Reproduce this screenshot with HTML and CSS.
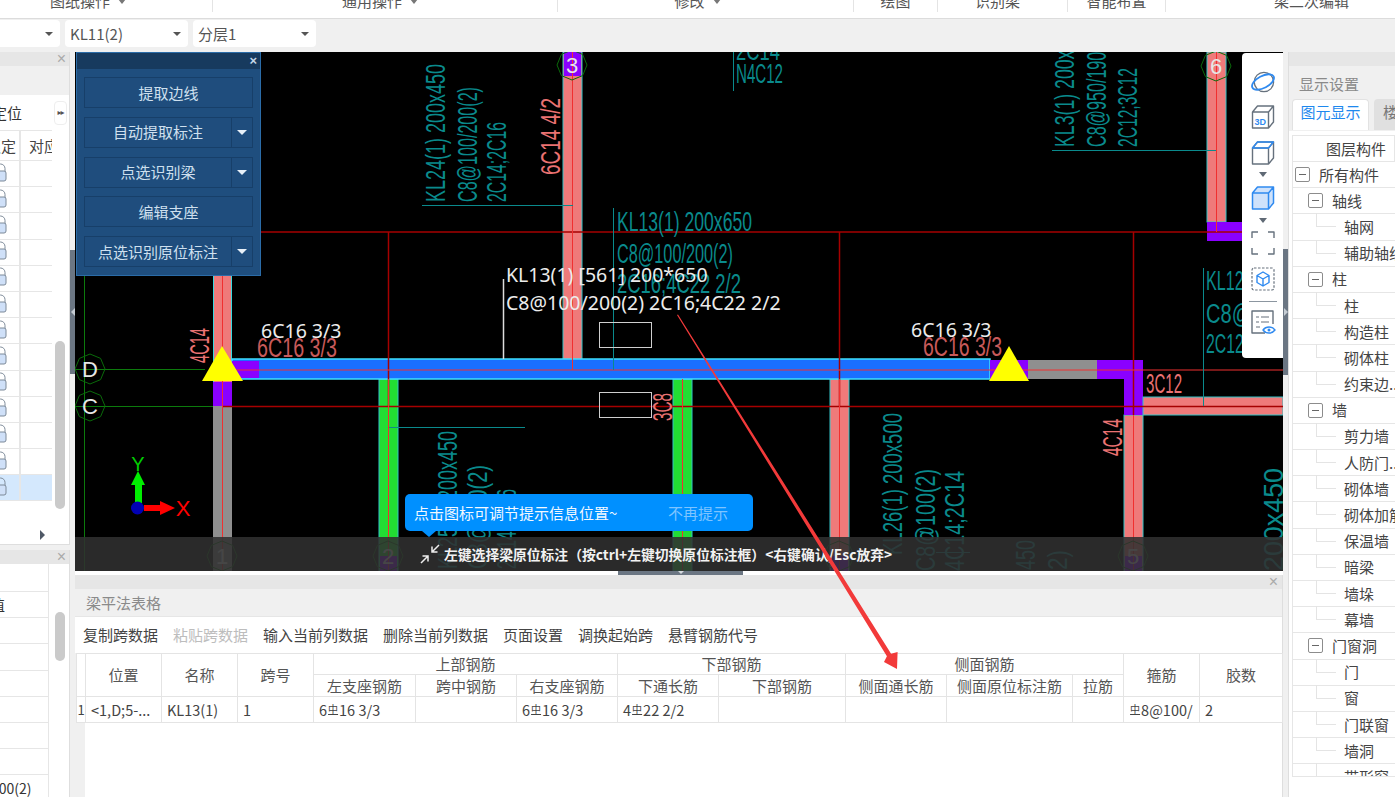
FILE: index.html
```html
<!DOCTYPE html>
<html lang="zh-CN">
<head>
<meta charset="utf-8">
<title>梁平法表格</title>
<link rel="stylesheet" href="styles.css">
</head>
<body>
<div class="app">
  <header class="ribbon">
    <div class="rb-sec rb-1"><span class="rb-label">图纸操作<i class="rb-caret"></i></span></div>
    <div class="rb-sec rb-2"><span class="rb-label">通用操作<i class="rb-caret"></i></span></div>
    <div class="rb-sec rb-3"><span class="rb-label">修改<i class="rb-caret"></i></span></div>
    <div class="rb-sec rb-4"><span class="rb-label">绘图</span></div>
    <div class="rb-sec rb-5"><span class="rb-label">识别梁</span></div>
    <div class="rb-sec rb-6"><span class="rb-label">智能布置</span></div>
    <div class="rb-sec rb-7"><span class="rb-label">梁二次编辑</span></div>
  </header>

  <div class="selects">
    <div class="sel sel-a"><span></span><i class="caret"></i></div>
    <div class="sel sel-b"><span>KL11(2)</span><i class="caret"></i></div>
    <div class="sel sel-b"><span>分层1</span><i class="caret"></i></div>
  </div>

  <div class="main">
    <aside class="left">
      <section class="lp-top">
        <div class="pane-head"><span class="close">×</span></div>
        <div class="lp-strip"></div>
        <div class="lp-title"><span class="lp-title-text">定位</span><span class="more">▸▸</span></div>
        <div class="lp-table">
          <div class="lp-row lp-head"><div class="c1"><span class="c1-text">锁定</span></div><div class="c2">对应</div></div>
          <div class="lp-row"><div class="c1"><svg class="lock"><use href="#lock"/></svg></div><div class="c2"></div></div>
          <div class="lp-row"><div class="c1"><svg class="lock"><use href="#lock"/></svg></div><div class="c2"></div></div>
          <div class="lp-row"><div class="c1"><svg class="lock"><use href="#lock"/></svg></div><div class="c2"></div></div>
          <div class="lp-row"><div class="c1"><svg class="lock"><use href="#lock"/></svg></div><div class="c2"></div></div>
          <div class="lp-row"><div class="c1"><svg class="lock"><use href="#lock"/></svg></div><div class="c2"></div></div>
          <div class="lp-row"><div class="c1"><svg class="lock"><use href="#lock"/></svg></div><div class="c2"></div></div>
          <div class="lp-row"><div class="c1"><svg class="lock"><use href="#lock"/></svg></div><div class="c2"></div></div>
          <div class="lp-row"><div class="c1"><svg class="lock"><use href="#lock"/></svg></div><div class="c2"></div></div>
          <div class="lp-row"><div class="c1"><svg class="lock"><use href="#lock"/></svg></div><div class="c2"></div></div>
          <div class="lp-row"><div class="c1"><svg class="lock"><use href="#lock"/></svg></div><div class="c2"></div></div>
          <div class="lp-row"><div class="c1"><svg class="lock"><use href="#lock"/></svg></div><div class="c2"></div></div>
          <div class="lp-row"><div class="c1"><svg class="lock"><use href="#lock"/></svg></div><div class="c2"></div></div>
          <div class="lp-row is-sel"><div class="c1"><svg class="lock"><use href="#lock"/></svg></div><div class="c2"></div></div>
        </div>
        <div class="scroll scroll-a"></div>
        <span class="lp-arrow"></span>
      </section>
      <section class="lp-bottom">
        <div class="pane-head"><span class="close">×</span></div>
        <div class="lb-table">
          <div class="lb-row lb-blank"></div>
          <div class="lb-row"><span class="lb-clip">值</span></div>
          <div class="lb-row"></div>
          <div class="lb-row"></div>
          <div class="lb-row"></div>
          <div class="lb-row"></div>
          <div class="lb-row"></div>
          <div class="lb-row"></div>
          <div class="lb-row"><span class="lb-clip2">100(2)</span></div>
        </div>
        <div class="scroll scroll-b"></div>
      </section>
    </aside>

    <div class="split"><div class="split-handle"><span class="tri-l"></span></div></div>

    <div class="center">
      <div class="canvas">
        <svg class="cad" viewBox="75 52 1208 519" width="1208" height="519">
          <defs>
            <polygon id="oct" points="15,0 10.6,10.6 0,15 -10.6,10.6 -15,0 -10.6,-10.6 0,-15 10.6,-10.6" class="bubble"/>
          </defs>

          <!-- axis lines -->
          <line x1="84.5" y1="52" x2="84.5" y2="571" class="l-green"/>
          <line x1="75" y1="369.5" x2="205" y2="369.5" class="l-green"/>
          <line x1="75" y1="406.5" x2="214" y2="406.5" class="l-green"/>

          <!-- columns -->
          <rect x="213" y="260" width="19" height="122" class="f-pink"/>
          <rect x="213" y="382" width="19" height="24" class="f-purple"/>
          <rect x="213" y="406" width="19" height="165" class="f-grey"/>
          <line x1="213.5" y1="260" x2="213.5" y2="382" class="l-cyan"/>
          <line x1="231.5" y1="260" x2="231.5" y2="360" class="l-cyan"/>

          <rect x="563" y="52" width="19" height="308" class="f-pink s-teal"/>
          <rect x="564" y="52" width="17" height="24" class="f-purple"/>

          <rect x="1207" y="52" width="19" height="170" class="f-pink s-teal"/>
          <rect x="1207" y="222" width="36" height="19" class="f-purple"/>

          <rect x="379" y="379" width="19" height="192" class="f-green s-teal"/>
          <rect x="673" y="379" width="19" height="192" class="f-green s-teal"/>
          <rect x="830" y="379" width="19" height="192" class="f-pink s-teal"/>
          <rect x="1124" y="415" width="19" height="156" class="f-pink s-teal"/>
          <rect x="380" y="556" width="17" height="15" class="f-purple"/>
          <rect x="831" y="556" width="17" height="15" class="f-purple"/>
          <rect x="1125" y="556" width="17" height="15" class="f-purple"/>

          <!-- beams -->
          <rect x="232" y="359" width="758" height="20" class="f-blue s-cyan"/>
          <rect x="232" y="361" width="27" height="17" class="f-purple"/>
          <rect x="990" y="360" width="38" height="19" class="f-purple"/>
          <rect x="1028" y="360" width="69" height="19" class="f-grey"/>
          <polygon points="1097,360 1143,360 1143,415 1124,415 1124,379 1097,379" class="f-purple"/>
          <rect x="1143" y="397" width="140" height="18" class="f-pink s-teal"/>

          <!-- grid lines -->
          <line x1="222" y1="232" x2="1242" y2="232" class="l-dred"/>
          <line x1="222" y1="406.5" x2="1283" y2="406.5" class="l-dred"/>
          <line x1="388.5" y1="232" x2="388.5" y2="406" class="l-dred"/>
          <line x1="839.5" y1="232" x2="839.5" y2="406" class="l-dred"/>
          <line x1="1133.5" y1="232" x2="1133.5" y2="415" class="l-dred"/>
          <line x1="232" y1="370" x2="1283" y2="370" class="l-red"/>
          <line x1="222.5" y1="276" x2="222.5" y2="571" class="l-red"/>
          <line x1="572.5" y1="52" x2="572.5" y2="370" class="l-red"/>
          <line x1="1216.5" y1="52" x2="1216.5" y2="232" class="l-red"/>
          <line x1="388.5" y1="379" x2="388.5" y2="571" class="l-red"/>
          <line x1="682.5" y1="379" x2="682.5" y2="571" class="l-red"/>
          <line x1="839.5" y1="379" x2="839.5" y2="571" class="l-red"/>
          <line x1="1133.5" y1="415" x2="1133.5" y2="571" class="l-red"/>

          <!-- teal annotation leaders -->
          <line x1="422" y1="205.5" x2="573" y2="205.5" class="l-teal"/>
          <line x1="613.5" y1="208" x2="613.5" y2="370" class="l-teal"/>
          <line x1="733.5" y1="52" x2="733.5" y2="91" class="l-teal"/>
          <line x1="1052" y1="150.5" x2="1216" y2="150.5" class="l-teal"/>
          <line x1="1203.5" y1="268" x2="1203.5" y2="406" class="l-teal"/>
          <line x1="389" y1="427.5" x2="525" y2="427.5" class="l-teal"/>
          <line x1="936" y1="552.5" x2="970" y2="552.5" class="l-teal"/>

          <!-- teal annotations -->
          <text class="t-teal" transform="translate(445,202) rotate(-90)" textLength="138" lengthAdjust="spacingAndGlyphs">KL24(1) 200x450</text>
          <text class="t-teal" transform="translate(477,202) rotate(-90)" textLength="115" lengthAdjust="spacingAndGlyphs">C8@100/200(2)</text>
          <text class="t-teal" transform="translate(506,202) rotate(-90)" textLength="80" lengthAdjust="spacingAndGlyphs">2C14;2C16</text>
          <text class="t-teal" x="617" y="231" textLength="135" lengthAdjust="spacingAndGlyphs">KL13(1) 200x650</text>
          <text class="t-teal" x="617" y="263" textLength="116" lengthAdjust="spacingAndGlyphs">C8@100/200(2)</text>
          <text class="t-teal" x="617" y="293" textLength="124" lengthAdjust="spacingAndGlyphs">2C16;4C22 2/2</text>
          <text class="t-teal" x="736" y="60" textLength="44" lengthAdjust="spacingAndGlyphs">2C14</text>
          <text class="t-teal" x="736" y="83" textLength="47" lengthAdjust="spacingAndGlyphs">N4C12</text>
          <text class="t-teal" transform="translate(1074,147) rotate(-90)" textLength="126" lengthAdjust="spacingAndGlyphs">KL3(1) 200x650</text>
          <text class="t-teal" transform="translate(1106,147) rotate(-90)" textLength="115" lengthAdjust="spacingAndGlyphs">C8@950/190(2)</text>
          <text class="t-teal" transform="translate(1137,147) rotate(-90)" textLength="79" lengthAdjust="spacingAndGlyphs">2C12;3C12</text>
          <text class="t-teal" x="1206" y="290" textLength="124" lengthAdjust="spacingAndGlyphs">KL12(1) 200x500</text>
          <text class="t-teal" x="1206" y="323" textLength="104" lengthAdjust="spacingAndGlyphs">C8@100(2)</text>
          <text class="t-teal" x="1206" y="353" textLength="80" lengthAdjust="spacingAndGlyphs">2C12;2C14</text>
          <text class="t-teal" transform="translate(457,569) rotate(-90)" textLength="138" lengthAdjust="spacingAndGlyphs">KL25(1) 200x450</text>
          <text class="t-teal" transform="translate(487,569) rotate(-90)" textLength="104" lengthAdjust="spacingAndGlyphs">C8@100(2)</text>
          <text class="t-teal" transform="translate(516,569) rotate(-90)" textLength="80" lengthAdjust="spacingAndGlyphs">2C14;2C16</text>
          <text class="t-teal" transform="translate(902,555) rotate(-90)" textLength="142" lengthAdjust="spacingAndGlyphs">KL26(1) 200x500</text>
          <text class="t-teal" transform="translate(935,571) rotate(-90)" textLength="102" lengthAdjust="spacingAndGlyphs">C8@100(2)</text>
          <text class="t-teal" transform="translate(964,571) rotate(-90)" textLength="100" lengthAdjust="spacingAndGlyphs">4C14;2C14</text>
          <text class="t-teal" transform="translate(1035,570) rotate(-90)" textLength="30" lengthAdjust="spacingAndGlyphs">450</text>
          <text class="t-teal" transform="translate(1067,570) rotate(-90)" textLength="20" lengthAdjust="spacingAndGlyphs">2)</text>
          <text class="t-teal" transform="translate(1283,571) rotate(-90)" textLength="103" lengthAdjust="spacingAndGlyphs">200x450</text>

          <!-- pink annotations -->
          <text class="t-pink" transform="translate(560,175) rotate(-90)" textLength="77" lengthAdjust="spacingAndGlyphs">6C14 4/2</text>
          <text class="t-pink" x="1146" y="393" textLength="36" lengthAdjust="spacingAndGlyphs">3C12</text>
          <text class="t-pink" transform="translate(209,363) rotate(-90)" textLength="35" lengthAdjust="spacingAndGlyphs">4C14</text>
          <text class="t-pink" transform="translate(1122,456) rotate(-90)" textLength="37" lengthAdjust="spacingAndGlyphs">4C14</text>
          <text class="t-pink" transform="translate(672,421) rotate(-90)" textLength="28" lengthAdjust="spacingAndGlyphs">3C8</text>
          <text class="t-rose" x="257" y="357" textLength="80" lengthAdjust="spacingAndGlyphs">6C16  3/3</text>
          <text class="t-rose" x="923" y="356" textLength="79" lengthAdjust="spacingAndGlyphs">6C16  3/3</text>

          <!-- axis bubbles -->
          <use href="#oct" x="90" y="369"/><use href="#oct" x="90" y="406"/>
          <use href="#oct" x="572" y="65"/><use href="#oct" x="1216" y="66"/>
          <use href="#oct" x="222" y="556"/><use href="#oct" x="388" y="556"/>
          <use href="#oct" x="839" y="556"/><use href="#oct" x="1133" y="556"/>
          <text class="t-bub" x="90" y="377">D</text>
          <text class="t-bub" x="90" y="414">C</text>
          <text class="t-bub" x="572" y="73">3</text>
          <text class="t-bub" x="1216" y="74">6</text>
          <text class="t-bub" x="222" y="564">1</text>
          <text class="t-bub" x="388" y="564">2</text>
          <text class="t-bub" x="1133" y="564">5</text>

          <!-- support triangles -->
          <polygon points="222,346 243,381 202,381" class="f-yellow"/>
          <polygon points="1009,346 1029,381 989,381" class="f-yellow"/>

          <!-- picked beam texts -->
          <text class="t-white" x="506" y="282">KL13(1) [561] 200*650</text>
          <text class="t-white" x="506" y="310">C8@100/200(2) 2C16;4C22 2/2</text>
          <text class="t-white" x="261" y="338">6C16 3/3</text>
          <text class="t-white" x="911" y="337">6C16 3/3</text>
          <line x1="503.5" y1="279" x2="503.5" y2="359" class="l-white"/>
          <rect x="599.5" y="322.5" width="52" height="25" class="r-white"/>
          <rect x="599.5" y="392.5" width="52" height="25" class="r-white"/>

          <!-- UCS -->
          <rect x="135" y="485" width="7" height="18" class="f-lime"/>
          <polygon points="138,471 145,485 131,485" class="f-lime"/>
          <rect x="144" y="505" width="17" height="6" class="f-rd"/>
          <polygon points="175,508 160,501 160,515" class="f-rd"/>
          <circle cx="137.5" cy="508" r="6.5" class="f-navy"/>
          <text class="t-ucs-y" x="138" y="471">Y</text>
          <text class="t-ucs-x" x="183" y="516">X</text>
        </svg>

        <div class="panel-float">
          <div class="pf-head"><span class="pf-x">×</span></div>
          <div class="pf-btn">提取边线</div>
          <div class="pf-btn pf-split"><span class="pf-label">自动提取标注</span><span class="pf-drop"><i></i></span></div>
          <div class="pf-btn pf-split"><span class="pf-label">点选识别梁</span><span class="pf-drop"><i></i></span></div>
          <div class="pf-btn">编辑支座</div>
          <div class="pf-btn pf-split"><span class="pf-label">点选识别原位标注</span><span class="pf-drop"><i></i></span></div>
        </div>

        <div class="view-tools">
          <svg class="vi" viewBox="0 0 26 24"><circle cx="14" cy="12" r="10.5" class="i-grey"/><ellipse cx="13" cy="12" rx="13" ry="6.5" transform="rotate(-28 13 12)" class="i-blue"/></svg>
          <svg class="vi mt11" viewBox="0 0 24 24"><path d="M1.5 7h16v16h-16zM1.5 7l5-6h16l-5 6M22.5 1v16l-5 6" class="i-grey"/><text x="3.5" y="20" class="i-3d">3D</text></svg>
          <svg class="vi mt12" viewBox="0 0 24 24"><path d="M1.5 7h16v16h-16zM1.5 7l5-6h16l-5 6M22.5 1v16l-5 6" class="i-grey-top"/><path d="M1.5 7l5-6h16l-5 6z" class="i-blue-thin"/></svg>
          <span class="vcaret mt7"></span>
          <svg class="vi mt9" viewBox="0 0 24 24"><path d="M1.5 7h16v16h-16zM1.5 7l5-6h16l-5 6zM22.5 1v16l-5 6V7z" class="i-fill"/></svg>
          <span class="vcaret mt8"></span>
          <svg class="vi mt8" viewBox="0 0 24 24"><path d="M1 7V1h6M17 1h6v6M23 17v6h-6M7 23H1v-6" class="i-grey"/></svg>
          <svg class="vi mt12" viewBox="0 0 24 24"><rect x="1" y="1" width="22" height="22" rx="2" class="i-dash"/><path d="M12 5l6 3.5v7L12 19l-6-3.5v-7zM6 8.500l6 3.500 6-3.500M12 12v7" class="i-blue-thin"/></svg>
          <span class="vsep"></span>
          <svg class="vi mt8" viewBox="0 0 24 24"><path d="M14 23H1V1h21v13" class="i-grey"/><path d="M5 7h3M10 7h8M5 12h3M10 12h8M5 17h4" class="i-line"/><path d="M12 20c3-4 9-4 12 0-3 4-9 4-12 0z" class="i-blue-thin"/><circle cx="18" cy="20" r="1.500" class="i-dot"/></svg>
        </div>

        <div class="hint-bar">
          <svg class="hint-ico" viewBox="0 0 20 20"><path d="M1 19l7-7M2.500 12H8v5.500M19 1l-7 7M17.500 8H12V2.500" class="i-white"/></svg>
          <span class="hint-text">左键选择梁原位标注（按ctrl+左键切换原位标注框）&lt;右键确认/Esc放弃&gt;</span>
        </div>

        <div class="tip">
          <span class="tip-text">点击图标可调节提示信息位置~</span>
          <span class="tip-link">不再提示</span>
        </div>
      </div>

      <div class="gutter"><div class="gutter-handle"><span class="tri-d"></span></div></div>

      <section class="grid-panel">
        <div class="pane-head pane-head-r"><span class="close">×</span></div>
        <div class="gp-title">梁平法表格</div>
        <div class="gp-tools">
          <span>复制跨数据</span><span class="is-off">粘贴跨数据</span><span>输入当前列数据</span><span>删除当前列数据</span><span>页面设置</span><span>调换起始跨</span><span>悬臂钢筋代号</span>
        </div>
        <div class="gp-body">
          <table class="beam">
            <colgroup>
              <col class="w9"><col class="w76"><col class="w76"><col class="w76"><col class="w102"><col class="w101"><col class="w101"><col class="w101"><col class="w127"><col class="w101"><col class="w126"><col class="w51"><col class="w76"><col class="w83">
            </colgroup>
            <thead>
              <tr class="h1">
                <th rowspan="2"></th><th rowspan="2">位置</th><th rowspan="2">名称</th><th rowspan="2">跨号</th>
                <th colspan="3">上部钢筋</th><th colspan="2">下部钢筋</th><th colspan="3">侧面钢筋</th>
                <th rowspan="2">箍筋</th><th rowspan="2">胶数</th>
              </tr>
              <tr class="h2">
                <th>左支座钢筋</th><th>跨中钢筋</th><th>右支座钢筋</th><th>下通长筋</th><th>下部钢筋</th><th>侧面通长筋</th><th>侧面原位标注筋</th><th>拉筋</th>
              </tr>
            </thead>
            <tbody>
              <tr>
                <td class="num">1</td><td>&lt;1,D;5-...</td><td>KL13(1)</td><td>1</td>
                <td>6<span class="rebar">中</span>16 3/3</td><td></td><td>6<span class="rebar">中</span>16 3/3</td>
                <td>4<span class="rebar">中</span>22 2/2</td><td></td><td></td><td></td><td></td>
                <td class="clip"><span class="rebar">中</span>8@100/</td><td>2</td>
              </tr>
            </tbody>
          </table>
        </div>
      </section>
    </div>

    <div class="split"><div class="split-handle split-handle-r"><span class="tri-r"></span></div></div>

    <aside class="right">
      <div class="pane-head"></div>
      <div class="rp-title">显示设置</div>
      <div class="rp-tabs">
        <span class="tab is-on">图元显示</span><span class="tab">楼层显示</span>
      </div>
      <div class="tree">
        <div class="tree-head">图层构件</div>
        <div class="tr l0"><i class="box"></i>所有构件</div>
        <div class="tr l1"><i class="box"></i>轴线</div>
        <div class="tr l2 in">轴网</div>
        <div class="tr l2 in">辅助轴线</div>
        <div class="tr l1"><i class="box"></i>柱</div>
        <div class="tr l2 in">柱</div>
        <div class="tr l2 in">构造柱</div>
        <div class="tr l2 in">砌体柱</div>
        <div class="tr l2 in">约束边...</div>
        <div class="tr l1"><i class="box"></i>墙</div>
        <div class="tr l2 in">剪力墙</div>
        <div class="tr l2 in">人防门...</div>
        <div class="tr l2 in">砌体墙</div>
        <div class="tr l2 in">砌体加筋</div>
        <div class="tr l2 in">保温墙</div>
        <div class="tr l2 in">暗梁</div>
        <div class="tr l2 in">墙垛</div>
        <div class="tr l2 in">幕墙</div>
        <div class="tr l1"><i class="box"></i>门窗洞</div>
        <div class="tr l2 in">门</div>
        <div class="tr l2 in">窗</div>
        <div class="tr l2 in">门联窗</div>
        <div class="tr l2 in">墙洞</div>
        <div class="tr l2 in">带形窗</div>
      </div>
    </aside>
  </div>

  <svg class="callout" viewBox="0 0 1395 797" width="1395" height="797">
    <polygon points="677,315 678,314.600 891.100,653.700 897.600,652 897,669 884,662 886.900,656.300" class="callout-fill"/>
  </svg>

  <svg class="defs" width="0" height="0">
    <defs>
      <g id="lock">
        <path d="M-4 9V5.500a4.500 4.500 0 0 1 9 0V9" class="lock-shackle"/>
        <rect x="-6" y="8" width="12" height="10" rx="2" class="lock-body"/>
      </g>
    </defs>
  </svg>
</div>
</body>
</html>
```

FILE: styles.css
```css
* { box-sizing: border-box; }
html, body { margin: 0; padding: 0; }
body {
  width: 1395px;
  height: 797px;
  overflow: hidden;
  background: #f0f0f0;
  color: #444;
  font: 15px/1.2 "Noto Sans CJK SC", "Liberation Sans", sans-serif;
}
i { font-style: normal; }
.app { position: relative; display: flex; flex-direction: column; width: 1395px; height: 797px; overflow: hidden; }

/* ribbon */
.ribbon { display: flex; height: 19px; background: #fff; border-bottom: 1px solid #dcdcdc; overflow: hidden; flex: none; }
.rb-sec { height: 12px; display: flex; justify-content: center; border-right: 1px solid #e4e4e4; color: #555; }
.rb-label { display: block; margin-top: -8px; white-space: nowrap; height: 22px; }
.rb-caret { display: inline-block; margin-left: 8px; vertical-align: 3px; border: 4px solid transparent; border-top: 5px solid #777; border-bottom: 0; }
.rb-1 { width: 213px; padding-right: 36px; }
.rb-2 { width: 345px; padding-right: 10px; }
.rb-3 { width: 296px; padding-right: 16px; }
.rb-4 { width: 84px; }
.rb-5 { width: 130px; padding-right: 10px; }
.rb-6 { width: 98px; }
.rb-7 { flex: 1; border-right: 0; padding-left: 62px; }

/* selects */
.selects { display: flex; gap: 5px; align-items: center; height: 33px; padding-bottom: 4px; flex: none; }
.sel { display: flex; align-items: center; justify-content: space-between; height: 27px; background: #fff; border-radius: 4px; padding: 0 7px 0 5px; color: #555; }
.sel-a { width: 60px; border-radius: 0 4px 4px 0; }
.sel-b { width: 123px; }
.caret { border: 4px solid transparent; border-top: 4px solid #555; border-bottom: 0; }

.main { display: flex; flex: 1; min-height: 0; }

/* common pane head */
.pane-head { height: 14px; background: #e6e6e6; display: flex; justify-content: flex-end; align-items: center; padding-right: 3px; flex: none; }
.close { color: #aaa; font: 16px/14px "Liberation Sans", sans-serif; }
.pane-head-r { padding-right: 4px; }

/* left */
.left { width: 70px; display: flex; flex-direction: column; flex: none; }
.lp-top { position: relative; height: 493px; background: #fff; border-right: 1px solid #dedede; border-bottom: 1px solid #dedede; overflow: hidden; flex: none; }
.lp-strip { height: 29px; background: #f0f0f0; }
.lp-title { display: flex; justify-content: space-between; align-items: center; height: 35px; padding-right: 2px; }
.lp-title-text { margin-left: -8px; color: #333; white-space: nowrap; }
.more { width: 13px; height: 24px; margin-right: 0; border: 1px solid #eee; border-radius: 4px; font: 8px/22px "DejaVu Sans", sans-serif; text-align: center; color: #555; letter-spacing: -1px; }
.lp-table { width: 52px; }
.lp-row { display: flex; height: 26.200px; border-bottom: 1px solid #e6e6e6; }
.lp-head { height: 31px; border-top: 1px solid #e6e6e6; align-items: center; }
.c1 { width: 21px; height: 100%; border-right: 2px solid #e6e6e6; overflow: hidden; display: flex; align-items: center; white-space: nowrap; }
.c1-text { margin-left: -14px; }
.c2 { flex: 1; padding-left: 8px; white-space: nowrap; overflow: hidden; }
.is-sel { background: #d4e8fd; }
.lock { width: 8px; height: 22px; overflow: visible; flex: none; }
.lock-body { fill: #cfe0f8; stroke: #7d8a99; stroke-width: 1; }
.lock-shackle { fill: none; stroke: #7d8a99; stroke-width: 1; }
.scroll { position: absolute; background: #cacaca; border-radius: 5px; width: 10px; }
.scroll-a { left: 55px; top: 289px; height: 168px; }
.scroll-b { left: 55px; top: 62px; height: 49px; }
.lp-arrow { position: absolute; left: 40px; top: 478px; border: 5px solid transparent; border-left: 5px solid #4f5866; border-right: 0; }

.lp-bottom { position: relative; flex: 1; margin-top: 5px; background: #fff; border-right: 1px solid #dedede; overflow: hidden; }
.lb-table { width: 49px; border-right: 1px solid #e6e6e6; height: 100%; }
.lb-row { height: 26.200px; border-bottom: 1px solid #e6e6e6; display: flex; align-items: center; white-space: nowrap; color: #333; }
.lb-blank { height: 28px; }
.lb-clip { margin-left: -10px; }
.lb-clip2 { margin-left: -9px; font-size: 14px; }

/* splitter */
.split { position: relative; width: 5px; background: #f0f0f0; flex: none; }
.split-handle { margin-top: 198px; height: 124px; background: #6b7683; display: flex; align-items: center; justify-content: center; }
.split-handle-r { margin-top: 197px; height: 126px; }
.tri-l { border: 4px solid transparent; border-right: 4px solid #c5ccd3; border-left: 0; }
.tri-r { border: 4px solid transparent; border-left: 4px solid #c5ccd3; border-right: 0; }

/* center */
.center { width: 1208px; display: flex; flex-direction: column; flex: none; }
.canvas { position: relative; height: 519px; background: #000; overflow: hidden; flex: none; }
.cad { display: block; }
.l-green { stroke: #0c7a0c; stroke-width: 1; }
.l-red { stroke: #f03030; stroke-width: 1; }
.l-dred { stroke: #a60000; stroke-width: 1.500; }
.l-cyan { stroke: #39d8e0; stroke-width: 1; }
.l-teal { stroke: #0a8a8c; stroke-width: 1; }
.l-white { stroke: #ddd; stroke-width: 1.500; }
.r-white { fill: none; stroke: #cfcfcf; stroke-width: 1; }
.f-pink { fill: #ef7a7a; }
.f-purple { fill: #8a00ff; }
.f-grey { fill: #8f8f8f; }
.f-green { fill: #22dd33; }
.f-blue { fill: #1a6fff; }
.f-yellow { fill: #ffff00; }
.f-lime { fill: #00ee00; }
.f-rd { fill: #ff0000; }
.f-navy { fill: #0000b4; }
.s-teal { stroke: #33c4c8; stroke-width: 1; }
.s-cyan { stroke: #3de0ff; stroke-width: 1.500; }
.bubble { fill: none; stroke: #0a6a0a; stroke-width: 1; }
.t-teal, .t-pink, .t-rose { font: 27px "Liberation Sans", sans-serif; }
.t-teal { fill: #0a8a8c; }
.t-pink { fill: #ea7272; }
.t-rose { fill: #c85a5a; }
.t-bub { fill: #e6e6e6; font: 22px "Liberation Sans", sans-serif; text-anchor: middle; }
.t-white { fill: #ececec; font: 19.500px "Noto Sans", sans-serif; }
.t-ucs-y { fill: #00cc00; font: 20px "Liberation Sans", sans-serif; text-anchor: middle; }
.t-ucs-x { fill: #ff0000; font: 22px "Liberation Sans", sans-serif; text-anchor: middle; }

/* floating recognition panel */
.panel-float { position: absolute; left: 1px; top: 0; width: 185px; height: 224px; background: #1f4e7e; border: 1px solid #2b6ca8; display: flex; flex-direction: column; align-items: center; }
.pf-head { width: 100%; height: 16px; background: #173a5e; display: flex; justify-content: flex-end; align-items: center; padding-right: 3px; margin-bottom: 8px; flex: none; }
.pf-x { color: #c4d6e8; font: bold 13px/16px "Liberation Sans", sans-serif; }
.pf-btn { width: 169px; height: 31px; margin-bottom: 8.750px; background: #1f4d7d; border: 1px solid #173f69; color: #cfe0ef; display: flex; align-items: center; justify-content: center; flex: none; }
.pf-split { justify-content: flex-start; }
.pf-label { flex: 1; text-align: center; }
.pf-drop { width: 21px; height: 100%; border-left: 1px solid #173f69; display: flex; align-items: center; justify-content: center; flex: none; }
.pf-drop i { border: 5px solid transparent; border-top: 5px solid #e8f0f8; border-bottom: 0; }

/* view tools */
.view-tools { position: absolute; right: 0; top: 1px; width: 41px; height: 305px; background: #fff; border-radius: 4px 0 0 4px; display: flex; flex-direction: column; align-items: center; padding-top: 17px; }
.vi { width: 24px; height: 24px; display: block; flex: none; overflow: visible; }
.mt7 { margin-top: 7px; } .mt8 { margin-top: 8px; } .mt9 { margin-top: 9px; } .mt11 { margin-top: 11px; } .mt12 { margin-top: 12px; }
.vcaret { border: 4px solid transparent; border-top: 5px solid #5f6975; border-bottom: 0; flex: none; }
.vsep { width: 28px; height: 1px; margin-top: 10px; background: #8c96a0; flex: none; }
.i-grey, .i-grey-top { fill: none; stroke: #66717d; stroke-width: 1.400; stroke-linejoin: round; }
.i-blue { fill: none; stroke: #2f8af0; stroke-width: 2; }
.i-blue-thin { fill: none; stroke: #2f8af0; stroke-width: 1.400; stroke-linejoin: round; }
.i-fill { fill: #cfe2fb; stroke: #2f8af0; stroke-width: 1.500; stroke-linejoin: round; }
.i-dash { fill: none; stroke: #66717d; stroke-width: 1.200; stroke-dasharray: 2.500 1.500; }
.i-line { fill: none; stroke: #66717d; stroke-width: 1.200; }
.i-dot { fill: #2f8af0; }
.i-3d { fill: #2f8af0; font: bold 9px "Liberation Sans", sans-serif; }
.i-white { fill: none; stroke: #eee; stroke-width: 1.500; }

/* hint */
.hint-bar { position: absolute; left: 0; right: 0; bottom: 0; height: 34px; background: rgba(48, 48, 48, 0.88); display: flex; align-items: center; padding-left: 345px; gap: 4px; }
.hint-ico { width: 20px; height: 20px; flex: none; }
.hint-text { color: #f2f2f2; font-weight: 700; font-size: 13.800px; white-space: nowrap; }
.tip { position: absolute; left: 330px; top: 442px; width: 348px; height: 37px; background: #0090ff; border-radius: 5px; display: flex; align-items: center; padding-left: 9px; white-space: nowrap; }
.tip::after { content: ""; position: absolute; left: 17px; bottom: -6px; border: 7px solid transparent; border-top: 6px solid #0090ff; border-bottom: 0; }
.tip-text { color: #f2f8ff; width: 254px; }
.tip-link { color: #7ec4ff; }

/* gutter */
.gutter { height: 4px; background: #fff; flex: none; }
.gutter-handle { width: 125px; height: 5px; margin-left: 543px; background: #6b7683; display: flex; justify-content: center; }
.tri-d { border: 3px solid transparent; border-top: 3px solid #d5dadf; border-bottom: 0; }

/* grid panel */
.grid-panel { flex: 1; display: flex; flex-direction: column; background: #fff; border-right: 1px solid #dedede; min-height: 0; }
.gp-title { height: 28px; background: #f0f0f0; border-bottom: 1px solid #e6e6e6; display: flex; align-items: center; padding-left: 11px; color: #8a8a8a; flex: none; }
.gp-tools { height: 36px; display: flex; align-items: center; gap: 15px; padding-left: 8px; color: #444; flex: none; }
.is-off { color: #bdbdbd; }
.gp-body { flex: 1; background: linear-gradient(#f0f0f0, #f0f0f0) left top / 10px 100% no-repeat, #fff; padding-left: 1px; min-height: 0; }
.beam { table-layout: fixed; border-collapse: collapse; width: 1206px; background: #fff; }
.beam th, .beam td { border: 1px solid #e4e4e4; padding: 0; font-weight: 400; overflow: hidden; white-space: nowrap; }
.beam th { text-align: center; color: #555; height: 21px; line-height: 18px; }
.beam .h2 th { height: 22px; }
.beam td { height: 26px; padding-left: 5px; color: #444; font-size: 14.500px; }
.beam .num { padding-left: 0; text-align: center; font-size: 13px; }
.w9 { width: 9px; } .w51 { width: 51px; } .w76 { width: 76px; } .w83 { width: 83px; }
.w101 { width: 101px; } .w102 { width: 102px; } .w126 { width: 126px; } .w127 { width: 127px; }
.rebar { font-size: 10px; vertical-align: 3px; text-decoration: underline; margin: 0 1px; }

/* right */
.right { flex: 1; min-width: 0; display: flex; flex-direction: column; background: #fff; border-left: 1px solid #dedede; }
.rp-title { height: 32px; background: #f0f0f0; display: flex; align-items: center; padding-left: 10px; padding-top: 4px; color: #8a8a8a; flex: none; }
.rp-tabs { height: 33px; background: #f0f0f0; display: flex; gap: 5px; padding: 0 0 0 3px; padding-top: 1px; overflow: hidden; white-space: nowrap; flex: none; border-bottom: 0; }
.tab { height: 31px; padding: 4px 9px 0; background: #e0e0e0; color: #777; border-radius: 4px 4px 0 0; flex: none; }
.tab.is-on { width: 77px; background: #fff; color: #1e88ee; border: 1px solid #e2e2e2; border-bottom: 0; padding: 3px 0 0; text-align: center; }
.tree { flex: 1; margin: 4px 0 20px 3px; border-left: 1px solid #e6e6e6; border-bottom: 1px solid #e6e6e6; overflow: hidden; min-height: 0; }
.tree-head { height: 27px; border: 1px solid #e6e6e6; border-left: 0; padding-left: 33px; display: flex; align-items: center; white-space: nowrap; }
.tr { position: relative; height: 26.200px; border-bottom: 1px solid #e6e6e6; display: flex; align-items: center; white-space: nowrap; color: #444; }
.l0 { padding-left: 2px; }
.l1 { padding-left: 15px; }
.l2 { padding-left: 51px; }
.box { position: relative; width: 15px; height: 15px; margin-right: 9px; border: 1px solid #8c8c8c; border-radius: 2px; background: #fff; flex: none; z-index: 1; }
.box::after { content: ""; position: absolute; left: 3px; right: 3px; top: 6px; height: 1px; background: #666; }
.in::before { content: ""; position: absolute; left: 23px; top: 12px; width: 20px; height: 1px; background: #e4e4e4; }
.in::after { content: ""; position: absolute; left: 23px; top: -1px; bottom: 13px; width: 1px; background: #e4e4e4; }

/* callout arrow over everything */
.callout { position: absolute; left: 0; top: 0; pointer-events: none; }
.callout-fill { fill: #f23a3a; }
.defs { position: absolute; }
```
